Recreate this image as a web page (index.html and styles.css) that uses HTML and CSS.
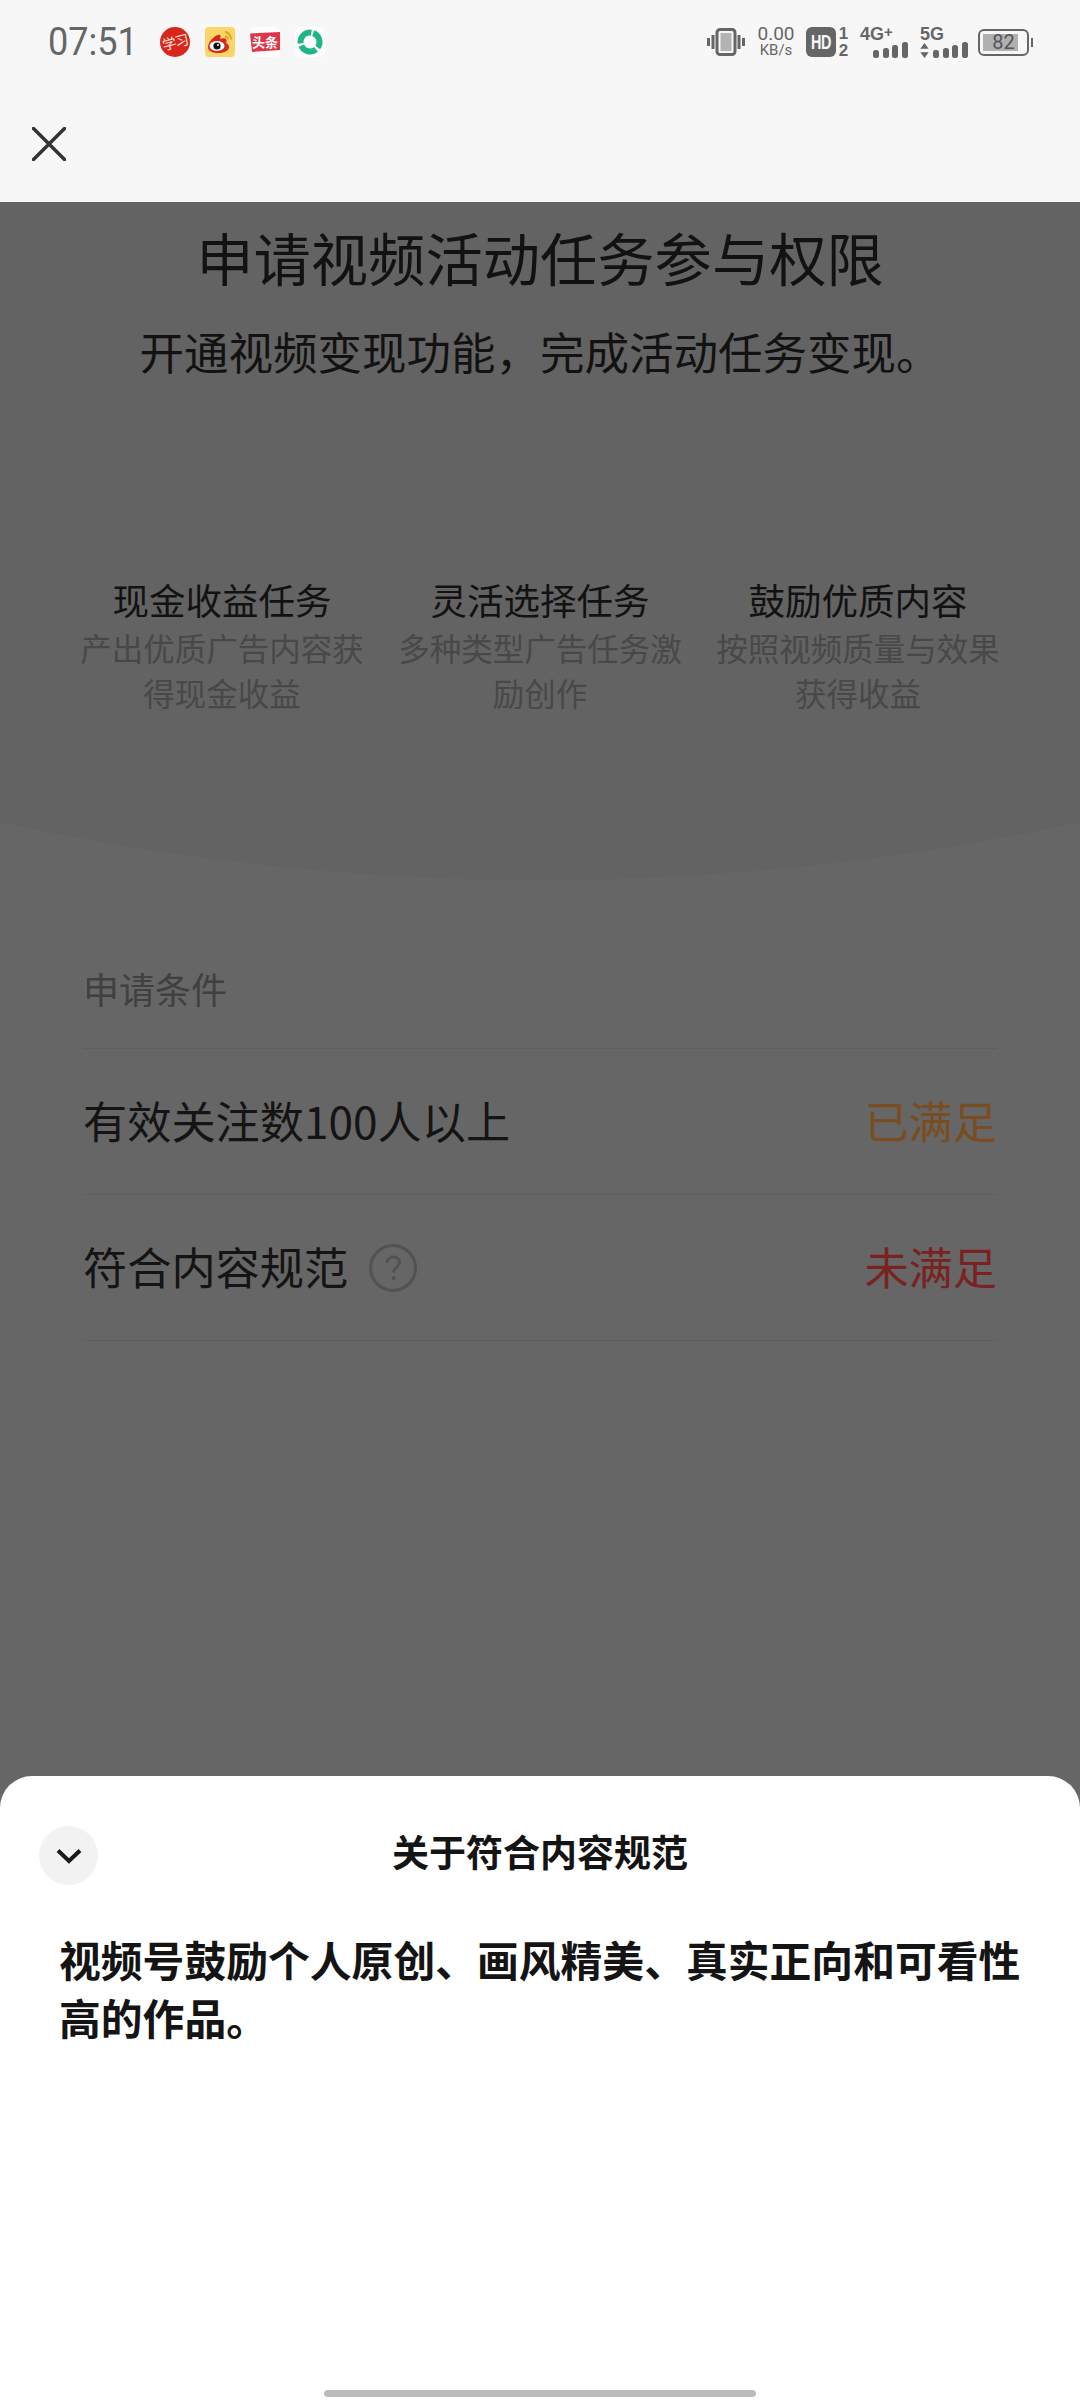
FILE: index.html
```html
<!DOCTYPE html>
<html lang="zh">
<head>
<meta charset="utf-8">
<title>申请视频活动任务参与权限</title>
<link rel="stylesheet" href="styles.css">
</head>
<body>
<div class="page">
  <header class="top">
    <div class="status">
      <div class="status-left">
        <span class="time">07:51</span>
        <div class="notifs">
          <svg class="notif" viewBox="0 0 30 30"><circle cx="15" cy="15" r="15" fill="#d8261c"/><text class="notif-xuexi" x="15" y="20.500" text-anchor="middle" transform="rotate(-14 15 15)">学习</text></svg>
          <svg class="notif" viewBox="0 0 30 30"><rect width="30" height="30" rx="4" fill="#fbd568"/><path d="M3 20c0-5 6-11 10-12 3-1 3 2 2 4 5-2 8 0 6 4 2 1 3 2 3 4 0 4-6 6-11 6S3 24 3 20z" fill="#d5281e"/><ellipse cx="12" cy="19" rx="7.500" ry="5" fill="#fff"/><circle cx="12" cy="19" r="3.600" fill="#111"/><circle cx="13" cy="18" r="1" fill="#fff"/><path d="M20 5c3 0 6 3 6 7.500M20 9.500c2 0 3 1 3 3" stroke="#e3a123" stroke-width="1.800" fill="none"/></svg>
          <svg class="notif" viewBox="0 0 30 30"><rect width="30" height="30" rx="5" fill="#fdfdfd"/><path d="M0 6.500L30 5v18L2 25z" fill="#e0364a"/><text class="notif-toutiao" x="15" y="20" text-anchor="middle">头条</text></svg>
          <svg class="notif" viewBox="0 0 30 30"><rect width="30" height="30" rx="6" fill="#fdfdfd"/><circle cx="15" cy="15" r="9.500" fill="none" stroke="#1fb585" stroke-width="6" stroke-dasharray="17.500 2.400" transform="rotate(-70 15 15)"/></svg>
        </div>
      </div>
      <div class="status-right">
        <svg class="vib" viewBox="0 0 38 28"><path d="M1.500 10v8M6 7v14M32 7v14M36.500 10v8" stroke="#666" stroke-width="3"/><rect x="10" y="1.500" width="18" height="25" rx="3" fill="#f7f7f7" stroke="#666" stroke-width="3"/><rect x="13.500" y="5" width="11" height="18" fill="#b3b3b3"/></svg>
        <div class="speed"><span class="speed-num">0.00</span><span class="speed-unit">KB/s</span></div>
        <div class="hd"><span class="hd-box"><span class="hd-text">HD</span></span><span class="hd-nums"><b>1</b><b>2</b></span></div>
        <div class="net net-4g">
          <span class="net-label">4G<sup>+</sup></span>
          <div class="bars"><i class="b1"></i><i class="b2"></i><i class="b3"></i><i class="b4"></i></div>
        </div>
        <div class="net net-5g">
          <span class="net-label">5G</span>
          <div class="net-row">
            <svg class="arrows" viewBox="0 0 10 18"><path d="M5 0l5 7H0zM5 18L0 11h10z" fill="#666"/></svg>
            <div class="bars"><i class="b1"></i><i class="b2"></i><i class="b3"></i><i class="b4"></i></div>
          </div>
        </div>
        <div class="battery"><div class="battery-body"><div class="battery-fill"></div><span class="battery-num">82</span></div><i class="battery-tip"></i></div>
      </div>
    </div>
    <div class="nav">
      <svg class="close" viewBox="0 0 34 34"><path d="M1.500 1.500l31 31M32.500 1.500l-31 31" stroke="#333" stroke-width="3.500" stroke-linecap="round" fill="none"/></svg>
    </div>
  </header>

  <main class="dim">
    <section class="hero">
      <h1 class="hero-title">申请视频活动任务参与权限</h1>
      <p class="hero-sub">开通视频变现功能，完成活动任务变现。</p>
      <div class="features">
        <div class="feature">
          <h2 class="feature-title">现金收益任务</h2>
          <p class="feature-desc">产出优质广告内容获得现金收益</p>
        </div>
        <div class="feature">
          <h2 class="feature-title">灵活选择任务</h2>
          <p class="feature-desc">多种类型广告任务激励创作</p>
        </div>
        <div class="feature">
          <h2 class="feature-title">鼓励优质内容</h2>
          <p class="feature-desc">按照视频质量与效果获得收益</p>
        </div>
      </div>
    </section>

    <section class="conditions">
      <div class="cond-label">申请条件</div>
      <div class="cond-row">
        <span class="cond-name">有效关注数100人以上</span>
        <span class="cond-ok">已满足</span>
      </div>
      <div class="cond-row">
        <span class="cond-name">符合内容规范
          <svg class="help" viewBox="0 0 48 48"><circle cx="24" cy="24" r="22.500" fill="none" stroke="#525252" stroke-width="3"/><path d="M18 19c0-4 3-6 6.500-6s6 2.500 6 5.500c0 4.500-6 5-6 10" fill="none" stroke="#525252" stroke-width="2.800"/><circle cx="24.500" cy="34" r="2" fill="#525252"/></svg>
        </span>
        <span class="cond-no">未满足</span>
      </div>
    </section>
  </main>

  <aside class="sheet">
    <div class="sheet-head">
      <button class="sheet-close" type="button">
        <svg class="chev" viewBox="0 0 26 16"><path d="M2 2.500l11 10.500L24 2.500" fill="none" stroke="#1a1a1a" stroke-width="4"/></svg>
      </button>
      <div class="sheet-title">关于符合内容规范</div>
    </div>
    <p class="sheet-body">视频号鼓励个人原创、画风精美、真实正向和可看性高的作品。</p>
    <div class="home-wrap"><div class="home"></div></div>
  </aside>
</div>
</body>
</html>
```
FILE: styles.css
```css
* { box-sizing: border-box; }
html, body { margin: 0; padding: 0; }
body {
  width: 1080px;
  height: 2400px;
  overflow: hidden;
  font-family: "Noto Sans CJK SC", "Noto Sans", sans-serif;
  background: #666;
}
h1, h2, p { margin: 0; font-weight: 400; }

.page { width: 1080px; height: 2400px; display: flex; flex-direction: column; }

.top { height: 202px; background: #f7f7f7; flex: none; }
.status {
  height: 84px;
  display: flex;
  justify-content: space-between;
  align-items: center;
  padding: 0 47px 0 48px;
}
.status-left { display: flex; align-items: center; }
.time {
  font-family: Roboto, sans-serif; font-size: 38px; line-height: 44px; color: #666;
  width: 112px; display: inline-block; transform: scaleX(0.95); transform-origin: left center;
}
.notifs { display: flex; gap: 15px; }
.notif { width: 30px; height: 30px; display: block; }
.notif-xuexi { font: 400 14px "Noto Sans CJK SC", sans-serif; fill: #fbe3dc; letter-spacing: -1px; }
.notif-toutiao { font: 700 13px "Noto Sans CJK SC", sans-serif; fill: #fff; }

.status-right { display: flex; align-items: center; }
.vib { width: 38px; height: 28px; display: block; margin-right: 12px; }
.speed { width: 38px; display: flex; flex-direction: column; align-items: center; color: #666; font-family: Roboto, sans-serif; margin-right: 11px; }
.speed-num { font-size: 19px; line-height: 17px; }
.speed-unit { font-size: 15px; line-height: 17px; }
.hd { display: flex; align-items: center; margin-right: 11px; }
.hd-box {
  width: 30px; height: 30px; border-radius: 6px; background: #666; color: #f7f7f7;
  font: 700 20px/30px "Liberation Sans", sans-serif; text-align: center;
}
.hd-text { display: inline-block; transform: scaleX(0.72); letter-spacing: -0.5px; }
.hd-nums { display: flex; flex-direction: column; width: 13px; padding-left: 2px; color: #666; font: 700 17px/17px "Liberation Sans", sans-serif; }
.hd-nums b { display: block; text-align: center; }
.net { display: flex; flex-direction: column; align-items: flex-start; color: #666; }
.net-label { font: 700 18px/14px "Liberation Sans", sans-serif; height: 14px; }
.net-label sup { font-size: 15px; line-height: 0; vertical-align: 3px; }
.net-4g { width: 48px; margin-right: 12px; }
.net-4g .bars { margin-left: 13px; margin-top: 1px; }
.net-5g { width: 48px; margin-right: 10px; }
.net-row { display: flex; align-items: flex-end; margin-top: 1px; }
.arrows { width: 9px; height: 15px; display: block; margin-right: 4px; }
.bars { display: flex; align-items: flex-end; gap: 3.700px; height: 16px; }
.bars i { display: block; width: 6px; border-radius: 2.500px; background: #666; }
.b1 { height: 8px; }
.b2 { height: 10px; }
.b3 { height: 13px; }
.b4 { height: 16px; }
.battery { display: flex; align-items: center; gap: 2px; }
.battery-body {
  position: relative;
  width: 51px; height: 27px; border: 2.500px solid #666; border-radius: 6px; padding: 3px;
}
.battery-fill { width: 35px; height: 100%; background: #b0b0b0; }
.battery-num {
  position: absolute; inset: 0; text-align: center;
  font: 400 20px/22px Roboto, sans-serif; color: #555;
}
.battery-tip { display: block; width: 2px; height: 9px; background: #666; }

.nav { height: 118px; display: flex; align-items: flex-start; padding: 43px 0 0 32px; }
.close { width: 34px; height: 34px; display: block; }

.dim { flex: 1; background: #666; }
.hero {
  height: 678px;
  background: #636363;
  clip-path: circle(2543px at 50% -1865px);
  padding-top: 19px;
  text-align: center;
}
.hero-title { font-size: 57.300px; line-height: 72px; color: #121212; }
.hero-sub { font-size: 44.500px; line-height: 60px; margin-top: 28px; color: #121212; }
.features { display: flex; padding: 0 63px; margin-top: 194px; }
.feature { width: 318px; flex: none; padding: 0 12px; }
.feature-title { font-size: 36.500px; line-height: 50px; color: #121212; white-space: nowrap; }
.feature-desc { font-size: 31.500px; line-height: 45px; color: #484848; }

.conditions { padding: 83px 83px 0 83px; }
.cond-label { font-size: 36px; line-height: 50px; color: #404040; height: 86px; border-bottom: 1px solid #5f5f5f; }
.cond-row {
  height: 146px;
  display: flex;
  justify-content: space-between;
  align-items: center;
  font-size: 44.200px;
  border-bottom: 1px solid #5f5f5f;
  padding-bottom: 4px;
}
.cond-name { color: #141414; display: flex; align-items: center; gap: 21px; }
.help { width: 48px; height: 48px; display: block; margin-top: 4px; }
.cond-ok { color: #7a4d20; }
.cond-no { color: #7a2222; }

.sheet {
  flex: none;
  height: 624px;
  background: #fff;
  border-radius: 32px 32px 0 0;
  display: flex;
  flex-direction: column;
}
.sheet-head { position: relative; height: 154px; padding-top: 48px; text-align: center; }
.sheet-close {
  position: absolute; left: 39px; top: 50px;
  width: 59px; height: 59px; border-radius: 50%; border: 0; padding: 0;
  background: #f2f2f2; display: flex; align-items: center; justify-content: center;
}
.chev { width: 26px; height: 16px; display: block; }
.sheet-title { font-size: 37px; line-height: 54px; font-weight: 700; color: #141414; }
.sheet-body { font-size: 41.800px; line-height: 58px; font-weight: 700; color: #141414; padding: 0 30px 0 59px; }
.home-wrap { margin-top: auto; padding-bottom: 3px; display: flex; justify-content: center; }
.home { width: 432px; height: 7px; border-radius: 3.500px; background: #bdbdbd; }
```
